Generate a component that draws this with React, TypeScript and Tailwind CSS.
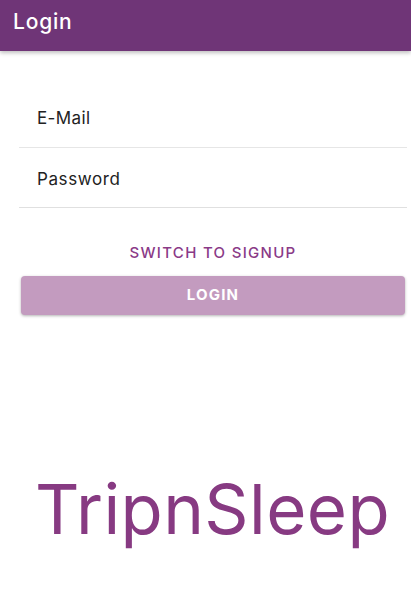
import { useState } from "react";

export default function App() {
  const [email, setEmail] = useState("");
  const [password, setPassword] = useState("");

  return (
    <div className="min-h-[597px] bg-white font-['Inter',sans-serif]">
      <header className="h-[51px] bg-[#6f3577] px-[13px] flex items-center shadow-[0_2px_4px_rgba(0,0,0,0.25)]">
        <h1 className="text-[21px] font-medium text-white leading-none tracking-[0.8px] -mt-[8px]">
          Login
        </h1>
      </header>

      <form
        className="pt-[37px] pl-[19px] pr-[4px]"
        onSubmit={(e) => e.preventDefault()}
      >
        <div className="h-[60px] border-b border-[#e6e6e6] flex items-center">
          <input
            type="email"
            placeholder="E-Mail"
            value={email}
            onChange={(e) => setEmail(e.target.value)}
            className="w-full h-full pl-[18px] pt-[1px] text-[17px] tracking-[0.4px] text-[#222] placeholder:text-[#222] outline-none bg-transparent"
          />
        </div>
        <div className="h-[60px] border-b border-[#e0e0e0] flex items-center">
          <input
            type="password"
            placeholder="Password"
            value={password}
            onChange={(e) => setPassword(e.target.value)}
            className="w-full h-full pl-[18px] pt-[2px] text-[17px] tracking-[0.6px] text-[#222] placeholder:text-[#222] outline-none bg-transparent"
          />
        </div>

        <div className="flex justify-center mt-[34px]">
          <button
            type="button"
            className="text-[15px] tracking-[1.3px] text-[#8a3a87] font-medium uppercase"
          >
            Switch to Signup
          </button>
        </div>

        <div className="pl-[2px] pr-[2px] mt-[11px]">
          <button
            type="submit"
            disabled
            className="w-full h-[39px] rounded-[4px] bg-[#c39bbf] text-white text-[15px] font-bold tracking-[1.2px] shadow-[0_1px_3px_rgba(0,0,0,0.3)]"
          >
            LOGIN
          </button>
        </div>
      </form>

      <div className="mt-[160px] flex justify-center pl-[14px]">
        <span className="text-[69px] leading-none text-[#873a82] tracking-[0.4px]">
          TripnSleep
        </span>
      </div>
    </div>
  );
}
